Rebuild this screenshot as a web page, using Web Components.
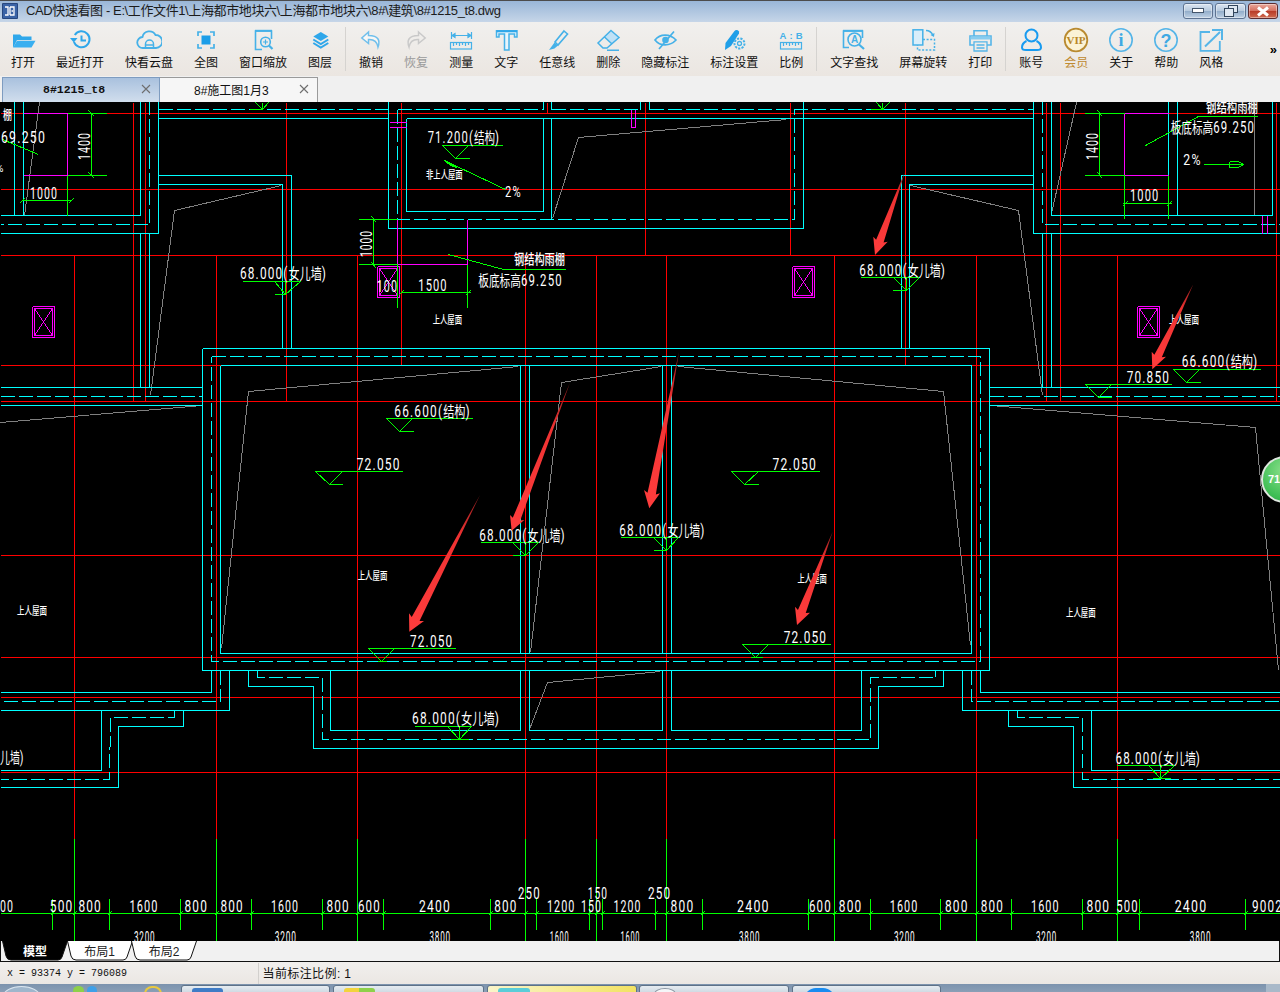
<!DOCTYPE html>
<html lang="zh"><head><meta charset="utf-8"><title>CAD快速看图</title>
<style>
html,body{margin:0;padding:0;height:992px;overflow:hidden;background:#f0f0f0}
body{display:flex;flex-direction:column;font-family:"Liberation Sans","Noto Sans CJK SC",sans-serif}
</style></head><body>
<title-bar>CAD快速看图 - E:\工作文件1\上海都市地块六\上海都市地块六\8#\建筑\8#1215_t8.dwg</title-bar>
<tool-bar></tool-bar>
<doc-tabs></doc-tabs>
<cad-canvas></cad-canvas>
<layout-tabs></layout-tabs>
<status-bar></status-bar>
<task-bar></task-bar>
<script>
const mk=(cls,name)=>customElements.define(name,cls);
class Base extends HTMLElement{
  constructor(html){super();this.attachShadow({mode:'open'}).innerHTML=html;}
}
mk(class extends Base{constructor(){super(`<style>
:host{display:flex;flex:none;height:22px;box-sizing:border-box;border-top:1px solid #4c4c4c;align-items:flex-start;background:linear-gradient(#99b6d8,#c6d6e8);color:#1c1c1c;font-size:13px;line-height:20px;position:relative}
.logo{flex:none;margin:2px 8px 0 2px;width:16px;height:16px}
.t{flex:1;white-space:nowrap;letter-spacing:-.39px}
.w{flex:none;display:flex;gap:2px;margin:2px 2px 0 0}
.b{box-sizing:border-box;height:16px;width:30px;border:1px solid #5d7391;border-radius:3px;background:linear-gradient(#dbe5f1 0,#b7cade 48%,#93aecb 52%,#bfd1e4 100%);display:flex;align-items:center;justify-content:center;box-shadow:inset 0 0 0 1px #ffffff66}
.c{border-color:#5c2c30;background:linear-gradient(#e9a99c 0,#d5705f 48%,#b83b28 52%,#cf6a4f 100%)}
</style>
<svg class="logo" viewBox="0 0 16 16"><rect width="16" height="16" rx="1" fill="#27477f"/><rect x="1" y="1" width="14" height="14" fill="#3a63a6"/><path d="M3 4h3v8H3M8 4v8M8 4h4v8h-4M9.5 8h1.5" fill="none" stroke="#fff" stroke-width="1.3"/></svg>
<span class="t"><slot></slot></span>
<div class="w">
<div class="b"><svg width="12" height="6"><rect x=".5" y=".5" width="11" height="4" fill="#fff" stroke="#44566c"/></svg></div>
<div class="b" style="width:31px"><svg width="14" height="12" fill="none" stroke="#33465c"><rect x="4.5" y=".5" width="9" height="7" fill="#dfe8f2"/><rect x=".5" y="3.5" width="9" height="8" fill="#dfe8f2"/></svg></div>
<div class="b c"><svg width="14" height="11"><path d="M2 1.5l10 8M12 1.5l-10 8" stroke="#fff" stroke-width="3"/></svg></div>
</div>`);}},'title-bar');

const B='#2fa7ea',L='#45b1e8';
const ruler=`<rect x="2.5" y="15.5" width="21" height="6.5"/><path d="M5.5 16v3M8.5 16v2M11.5 16v3M14.5 16v2M17.5 16v3M20.5 16v2"/>`;
const icons={
open:`<path d="M3 20V7.5h7l2 2h9.500V13H7L3.500 20z" fill="${B}"/><path d="M7 13.800h18.500L21.500 20.500H3z" fill="#39aff0"/>`,
recent:`<g fill="none" stroke="${B}" stroke-width="2"><path d="M7.800 8A8 8 0 1 1 7 15"/><path d="M14.500 8.500v5h4.500"/></g><path d="M3 11h7.500L6.800 15.500z" fill="${B}"/>`,
cloud:`<g fill="none" stroke="${L}" stroke-width="1.800"><path d="M7 21a5.500 5.500 0 0 1-.5-11A7 7 0 0 1 19.500 8a6.500 6.500 0 0 1 .5 13z"/><path d="M9.500 21v-4a4 4 0 0 1 8 0v4M9.500 18h8" stroke-width="1.500"/></g>`,
fit:`<path d="M5 9V5h4M17 5h4v4M21 17v4h-4M9 21H5v-4" fill="none" stroke="${L}" stroke-width="1.700"/><rect x="8.500" y="8.500" width="9" height="9" fill="#1c9ee8"/>`,
zoom:`<g fill="none" stroke="${L}" stroke-width="1.600"><path d="M21.500 12V4H5.500v18.500H12"/><path d="M5 3.800h17" stroke-width="2"/><circle cx="15.500" cy="15" r="4.800"/><path d="M19 18.500l3.500 3.500" stroke-width="2.200"/><path d="M13 15h5M15.500 12.500v5" stroke-width="1.200"/></g>`,
layers:`<path d="M13.800 5l7.500 4.500-7.500 4.500-7.500-4.500z" fill="${B}"/><g fill="none" stroke="${B}" stroke-width="2"><path d="M6.300 12.500l7.500 4.500 7.500-4.500M6.300 16l7.500 4.500 7.500-4.500"/></g>`,
undo:`<path d="M10.500 5L3.800 11l6.700 5.500v-4c5-.3 8.500 1.500 9.500 7.500 2.200-6 1-11.500-9.500-11.500z" fill="#fff8" stroke="#6fbfec" stroke-width="1.500"/>`,
redo:`<path d="M15.500 5L22.200 11l-6.700 5.500v-4c-5-.3-8.500 1.500-9.500 7.500-2.200-6-1-11.500 9.500-11.500z" fill="none" stroke="#c9c9c9" stroke-width="1.500"/>`,
measure:`<g fill="none" stroke="${L}" stroke-width="1.200"><path d="M3.500 5v7M23.500 5v7M4 8.500h19"/><path d="M4 8.500l3-2v4zM23 8.500l-3-2v4z" fill="${L}"/>${ruler}</g>`,
text:`<path d="M3.500 3.800H24V10h-2.500V7H16v16h-4.500V7H6v3H3.500z" fill="#e8f5fc" stroke="${L}" stroke-width="1.500"/><path d="M3.500 4.300H24" stroke="${B}" stroke-width="2"/>`,
pen:`<path d="M20 4l3.500 3L14 18l-3-3z" fill="none" stroke="${L}" stroke-width="1.600"/><path d="M10.500 15.500l3.500 3-3.500 3-5.500 1.500z" fill="${L}"/>`,
erase:`<path d="M16 4l8 6.500-7 6.500-7.500-7z" fill="#bfe1f6"/><path d="M16 3.500l8 7-12 10.500H8l-5-5zM9.500 10l7.500 7M12 23.300h12" fill="none" stroke="${L}" stroke-width="1.500"/>`,
eye:`<g fill="none" stroke="${L}" stroke-width="1.700"><path d="M3 13C8 6.500 18 6.500 24 13 18 19.500 8 19.500 3 13z"/><path d="M7 22L22 4.500"/></g><circle cx="13.500" cy="13" r="3.300" fill="${L}"/>`,
setting:`<path d="M13.500 4a2.600 2.600 0 0 1 4.500 2.500L10 19l-6 4 .5-7z" fill="#1f9fe8"/><circle cx="18.500" cy="16.500" r="5" fill="#f0eeeb" stroke="${L}" stroke-width="2" stroke-dasharray="2.200 1.200"/><circle cx="18.500" cy="16.500" r="2" fill="none" stroke="${L}" stroke-width="1.300"/>`,
scale:`<text x="1.500" y="11.500" font-family="Liberation Sans" font-weight="700" font-size="9.500" fill="${L}" textLength="23">A:B</text><g fill="none" stroke="${L}" stroke-width="1.200">${ruler}</g>`,
find:`<g fill="none" stroke="${L}" stroke-width="1.600"><path d="M21.500 11V4H2.500v16.500H8"/><path d="M2 3.800h20" stroke-width="2"/><circle cx="13.500" cy="12.500" r="6.500"/><path d="M18 17.500l5 4.500" stroke-width="2.200"/></g><text x="10" y="16" font-family="Liberation Sans" font-weight="700" font-size="10" fill="${L}">A</text>`,
rotate:`<g fill="none" stroke="${L}" stroke-width="1.500"><rect x="3" y="2.800" width="9.800" height="15.200" fill="#d9eefa"/><path d="M13 12.500h11.500V23H7.500v-5" stroke-dasharray="2 1.600"/><path d="M16 3.500c3 0 5.500 1.500 7 5"/></g><path d="M20.500 8l3.500 2 .5-4z" fill="${L}"/>`,
print:`<g fill="none" stroke="#55b5e8" stroke-width="1.600"><path d="M7 9V3.800h13V9M7 18H3V9h21v9h-4"/><path d="M7 14.800h13V24H7zM9.500 18h8M9.500 21h8" stroke-width="1.300"/></g><path d="M3.500 9.500h20v3h-20z" fill="#88cdf0"/>`,
user:`<g fill="none" stroke="#189bf0" stroke-width="2"><circle cx="13.500" cy="8.500" r="6"/><path d="M8.500 14C5.500 15.500 4 18 4 20.500 4 22.500 6 23 8 23h11c2 0 4-.5 4-2.500 0-2.500-1.500-5-4.500-6.500"/></g>`,
vip:`<circle cx="13" cy="13" r="11.300" fill="#fbf3d6" stroke="#b98a30" stroke-width="1.800"/><text x="13" y="16.500" text-anchor="middle" font-family="Liberation Serif" font-weight="700" font-size="10" fill="#b88726" textLength="19" lengthAdjust="spacingAndGlyphs">VIP</text>`,
info:`<circle cx="13" cy="13" r="11.200" fill="none" stroke="#55b5e8" stroke-width="1.600"/><text x="13" y="19" text-anchor="middle" font-family="Liberation Serif" font-weight="700" font-size="18" fill="#3fa9e3">i</text>`,
help:`<circle cx="13" cy="13" r="11.200" fill="none" stroke="#55b5e8" stroke-width="1.600"/><text x="13" y="19.500" text-anchor="middle" font-family="Liberation Sans" font-weight="700" font-size="18" fill="#3fa9e3">?</text>`,
style:`<g fill="none" stroke="#55b5e8" stroke-width="1.800"><path d="M12 5H2.500v18.800h19.300V14"/><path d="M7 19.500L22 5" stroke-width="2"/><path d="M14 3h10v10" stroke-width="2"/></g>`
};
mk(class extends Base{constructor(){super(`<style>
:host{display:flex;flex-direction:column;align-items:center;padding:5px 10.5px 0;font-size:12px;line-height:14px;color:#111;white-space:nowrap}
svg{display:block;margin:0 -2px 3px}
:host([vip]){color:#bf8a31}:host([off]){color:#9a9a9a}
</style><svg width="26" height="26" viewBox="0 0 26 26"></svg><slot></slot>`);}
connectedCallback(){this.shadowRoot.querySelector('svg').innerHTML=icons[this.getAttribute('icon')];}},'tool-item');
const S=`<i></i>`;
mk(class extends Base{constructor(){super(`<style>
:host{display:flex;flex:none;height:54px;padding-left:.5px;box-sizing:border-box;background:linear-gradient(#f1f0ee,#ebe6e1);position:relative}
i{flex:none;width:1px;margin:5px 2.5px 5px;background:#d5d3d0}
b{margin-left:auto;margin-right:3px;align-self:center;font:700 13px "Liberation Sans";padding-top:0}
</style>
<tool-item icon="open">打开</tool-item><tool-item icon="recent">最近打开</tool-item><tool-item icon="cloud">快看云盘</tool-item><tool-item icon="fit">全图</tool-item><tool-item icon="zoom">窗口缩放</tool-item><tool-item icon="layers">图层</tool-item>${S}
<tool-item icon="undo">撤销</tool-item><tool-item icon="redo" off>恢复</tool-item><tool-item icon="measure">测量</tool-item><tool-item icon="text">文字</tool-item><tool-item icon="pen">任意线</tool-item><tool-item icon="erase">删除</tool-item><tool-item icon="eye">隐藏标注</tool-item><tool-item icon="setting">标注设置</tool-item><tool-item icon="scale">比例</tool-item>${S}
<tool-item icon="find">文字查找</tool-item><tool-item icon="rotate">屏幕旋转</tool-item><tool-item icon="print">打印</tool-item>${S}
<tool-item icon="user">账号</tool-item><tool-item icon="vip" vip>会员</tool-item><tool-item icon="info">关于</tool-item><tool-item icon="help">帮助</tool-item><tool-item icon="style">风格</tool-item><b>»</b>`);}},'tool-bar');

mk(class extends Base{constructor(){super(`<style>
:host{display:flex;flex:none;height:26px;box-sizing:border-box;padding:1px 0 0 2px;background:#f0f0f0}
.t{box-sizing:border-box;width:158px;height:25px;display:flex;align-items:center;border:1px solid #9a9a9a;border-bottom:none;padding-bottom:2px;font-size:12px;color:#111;background:#f6f6f6}
.a{width:158px;background:linear-gradient(#a9c1de,#d1deed);border-color:#7e9cc0;padding-left:40px;font:700 11.5px "Liberation Mono",monospace}
.n{padding-left:34px;border-left:none}
svg{margin-left:auto;margin-right:8px}
</style>
<div class="t a">8#1215_t8<svg width="10" height="10"><path d="M1 1l8 8M9 1l-8 8" stroke="#6e6e6e" stroke-width="1.100"/></svg></div>
<div class="t n">8#施工图1月3<svg width="10" height="10"><path d="M1 1l8 8M9 1l-8 8" stroke="#6e6e6e" stroke-width="1.100"/></svg></div>`);}},'doc-tabs');

/* ---------- drawing ---------- */
const sn=v=>Math.floor(v)+.5;
const path=a=>'M'+a.map((v,i)=>sn(v)+(i%2?'':',')).join(' ').replace(/(\d) (-?\d+\.5,)/g,'$1 L$2');
const lines=(list,col,extra='')=>`<path d="${list.map(path).join(' ')}" fill="none" stroke="${col}" ${extra}/>`;
const red=[];
[113,189,255,365,401,555,657,697,772].forEach(y=>red.push([0,y,1280,y]));
[[133,401],[145,401],[286,401],[547,113],[645,255],[790,255],[1046,401],[1060,401],[1276,401]].forEach(([x,y])=>red.push([x,102,x,y]));
[401,905].forEach(x=>red.push([x,102,x,365]));
const longs=[74,216,357,525,596,666,834,976,1117];
longs.forEach(x=>red.push([x,255,x,838]));
const gray=[[39,102,24,215],[281.7,185,174.3,210.7,150,395],[0,422,202,405.5],[221.3,648,248,391,518.3,366],[530,652,561,382.3,661.7,366],[678,366,943.4,391,970,645],[990,405.7,1255.6,427.3,1278,670],[786.7,119,578,137.7,552.7,218.3],[1076.7,102,1051.7,213],[910.7,185,1018.3,210.7,1042.7,395],[1254.5,102,1254.5,215],[529.8,729,547,682.3,640,673.3,660,671.5]];
const cyan=[
[14.5,100,14.5,215],[23.5,100,23.5,215],[0,215,140.5,215,140.5,100],[0,233,158.5,233,158.5,100],
[158.5,118.5,388.5,118.5],[388.5,100,388.5,228.5,803.5,228.5,803.5,100],
[158.5,175.5,291.5,175.5,291.5,348],[158.5,184.5,282.5,184.5,282.5,348],
[140.5,233,140.5,387.5],[149.5,233,149.5,387.5],[0,387.5,202.5,387.5],[0,405.5,202.5,405.5],
[202.5,348.5,989.5,348.5,989.5,670.5,202.5,670.5,202.5,348.5],
[220.5,365.5,971.5,365.5,971.5,653.5,220.5,653.5,220.5,365.5],
[520.5,365,520.5,653],[529.5,365,529.5,653],[662.5,365,662.5,653],[671.5,365,671.5,653],
[543.5,118.5,543.5,211.5,406.5,211.5,406.5,118.5],[543.5,100,543.5,109.5],[551.5,100,551.5,109.5],[640.5,100,640.5,109.5],[649.5,100,649.5,109.5],
[406.5,118.5,1033.5,118.5],[551.5,118.5,551.5,219.5],
[1033.5,100,1033.5,233.5,1280,233.5],[1051.5,100,1051.5,215.5,1272.5,215.5,1272.5,100],[1168.5,100,1168.5,215],[1177.5,100,1177.5,215],
[901.5,348,901.5,175.5,1033.5,175.5],[909.5,348,909.5,184.5,1033.5,184.5],[1042.5,233,1042.5,387.5],[1051.5,233,1051.5,387.5],[989.5,387.5,1280,387.5],[989.5,405.5,1280,405.5],
[211.5,670,211.5,692.5,0,692.5],[229.5,670,229.5,710.5,0,710.5],[183.5,710,183.5,726.5,118.5,726.5,118.5,787.5,0,787.5],[101.5,710,101.5,770.5,0,770.5],
[248.5,670,248.5,686.5,313.5,686.5,313.5,748.5,878.5,748.5,878.5,686.5,943.5,686.5,943.5,670],
[330.5,670,330.5,730.5,520.5,730.5,520.5,670],[529.5,670,529.5,730.5,662.5,730.5,662.5,670],[671.5,670,671.5,730.5,861.5,730.5,861.5,670],
[962.5,670,962.5,710.5,1280,710.5],[980.5,670,980.5,692.5,1280,692.5],[1008.5,710,1008.5,726.5,1073.5,726.5,1073.5,787.5,1280,787.5],[1091.5,710,1091.5,770.5,1280,770.5]];
const dash=[
[149.5,100,149.5,224.5,0,224.5],[0,396.5,202.5,396.5],[158.5,109.5,388.5,109.5],[397.5,109.5,543.5,109.5],[551.5,109.5,640.5,109.5],[649.5,109.5,1033.5,109.5],
[397.5,109.5,397.5,219.5,794.5,219.5,794.5,109.5],[1042.5,100,1042.5,224.5,1280,224.5],[989.5,396.5,1280,396.5],
[211.5,356.5,980.5,356.5,980.5,661.5,211.5,661.5,211.5,356.5],
[220.5,670,220.5,701.5,0,701.5],[174.5,710,174.5,717.5,110,717.5,109.5,779.5,0,779.5],
[257.5,670,257.5,677.5,322.5,677.5,322.5,739.5,870.5,739.5,870.5,677.5,935.5,677.5,935.5,670],
[971.5,670,971.5,701.5,1280,701.5],[1017.5,710,1017.5,717.5,1082.5,717.5,1082.5,779.5,1280,779.5]];
const mag=[[23,113,67.5,113,67.5,175,23,175],[389,122,406,122],[389,127,406,127],[631.5,109,631.5,127,635.5,127,635.5,109],
[397.5,219,397.5,264.5,467.5,264.5,467.5,219],[1168.5,113,1124.5,113,1124.5,175,1168.5,175],[1262.5,215,1262.5,233],[1267.5,215,1267.5,233]];
const box=(x,y)=>{const X=x+22,Y=y+31;mag.push([x,y,X,y,X,Y,x,Y,x,y],[x+2,y+2,X-2,y+2,X-2,Y-2,x+2,Y-2,x+2,y+2],[x+2,y+2,X-2,Y-2],[X-2,y+2,x+2,Y-2]);};
box(32,306);box(377,266);box(792,266);box(1137,306);
const grn=[
[67.5,113,106.5,113],[67.5,175,106.5,175],[91,113,91,175],[67.5,175,67.5,215],[21.5,200.5,70.5,200.5],[2,139,38.5,154],
[88,110,94,116],[88,172,94,178],[19,203,24,198],[68,203,73,198],
[358,219,397,219],[358,264,397,264],[373.5,219,373.5,264],[397.5,264,397.5,307],[467.5,264,467.5,307],[400,292.5,470.5,292.5],[371,216,376,222],[371,262,376,268],[398,295,403,290],[465,295,470,290],
[444.3,160.3,505.7,189],[444.3,160.3,456.7,167.7,450,165,444.3,160.3],
[448.3,254.3,503.3,269.3,565,269.3],[1145,145.7,1198.3,116,1257.5,116],[1203.3,164.5,1242.7,164.5],[1229,161,1238,161,1243,164.5,1238,167.5,1229,167.5,1229,161],
[1084,113,1124.5,113],[1084,175,1124.5,175],[1099.5,113,1099.5,175],[1124.5,175,1124.5,218],[1168.5,175,1168.5,218],[1122,203.5,1171.5,203.5],[1097,110,1102,116],[1097,172,1102,178],[1122,206,1127,201],[1166,206,1171,201],
[249,109.5,262,109.5],[262,102,262,109.5],[255,102,262,109.5,268,102],[882.5,102,882.5,109.5],[876,102,882.5,109.5,889,102],[870,109.5,883,109.5],
[0,913,1280,913]];
const el=(x0,x1,y,l,t,r,s0,s1,c)=>{grn.push([x0,y,x1,y],[l,y,t,y+13,r,y],[s0,y+13,s1,y+13]);if(c)grn.push([t,y,t,y+13]);};
el(242,300,281.3,274,285.7,300,274,285.7,1);el(442.3,502.7,145.3,442.3,455.7,468.3,455.7,469);
el(860,919,277.3,893.3,906,919,892,906,1);el(1173.3,1260.7,369.3,1173.3,1186.7,1199.3,1186.7,1200);
el(1085,1171.7,384.3,1085,1098.3,1111.7,1098.3,1111);el(386,472.7,418.3,386,399.3,412.7,399.3,413);
el(315.3,402.7,471.3,315.3,329,342.3,329,342);el(480,538.7,542.3,512.7,525.3,538.7,512,525,1);
el(368.3,455,648.3,368.3,381.7,394.3,377,386);el(620,678.6,537.3,653.3,666,678.6,653,666,1);
el(731,819,471.3,731,744.6,758,744.6,758);el(742.2,830,644.3,742.2,755.3,768.3,750,762);
el(414,471.4,726.3,447,459,471.4,450,468,1);el(1116,1174,765.3,1148,1160.8,1174,1152,1170,1);
const ticks=[52.6,74,109.4,180.4,216,251.4,322.4,357.5,383.7,490.2,525,536.3,589.4,596,602.4,655.5,666.3,702.6,808.3,834,870.6,940.6,976,1011.6,1082.6,1117,1139.5,1245.2];
ticks.forEach(x=>{grn.push([x,898,x,929],[x-2,915,x+2,911]);});
longs.forEach(x=>grn.push([x,838,x,941]));
const cjk=/[\u4e00-\u9fff]+/g;
const T=(s,x0,x1,b,fs=16,cs=15,rot)=>{const all=/^[\u4e00-\u9fff]+$/.test(s);return `<text${all?' class="n"':''} x="${rot?b:x0}" y="${rot?x1:b}" font-size="${fs}" textLength="${x1-x0}" lengthAdjust="spacingAndGlyphs"${rot?` transform="rotate(-90 ${b} ${x1})"`:''}>${all?s:s.replace(cjk,m=>`<tspan font-size="${cs}" style="letter-spacing:0">${m}</tspan>`)}</text>`;};
const note=(x0,x1,cy)=>T('上人屋面',x0,x1,cy+4.5,11,11);
const texts=[
T('69.250',1,46,143),T('1000',30,58,198.5),T('棚',3,12,119,13,13),T('%',-4,5,172,10),
T('68.000(女儿墙)',240,327,279),T('100',376.7,398,291.5),
T('71.200(结构)',427.7,500,143),T('非上人屋面',426,462.7,178.5,11,11),T('2%',505,522,196.5,14),
T('钢结构雨棚',514,565,264,14,14),T('板底标高69.250',478.3,562.7,286),T('1500',418.3,447.7,290.5),note(432.7,462,319),
T('68.000(女儿墙)',859.3,946,275.5),T('66.600(结构)',1181.7,1258.3,366.5),T('70.850',1126.7,1170,382.5),note(1169,1199,319),
T('钢结构雨棚',1206,1258,111.5,14,14),T('板底标高69.250',1170.7,1255,132.5),T('2%',1183.3,1202,165,14),T('1000',1130,1159.3,201),
T('66.600(结构)',394.3,470.7,416.5),T('72.050',356.7,400.7,470),T('68.000(女儿墙)',479.3,565.7,541),note(357.7,387.3,575),T('72.050',410,453.3,646.5),
T('68.000(女儿墙)',619.3,705.5,535.5),T('72.050',772.6,817,470),T('72.050',783.7,827.2,642.5),note(797.5,826.8,578.7),note(1066,1095.6,612.3),note(17,47,610),
T('68.000(女儿墙)',412,500,723.5),T('儿墙)',0,24.5,763),T('68.000(女儿墙)',1115.5,1201,763.5),
T('1400',132,160,90,16,13,1),T('1400',132,160,1098,16,13,1),T('1000',230,257,372,16,13,1)];
[['00',0,14],['500',49.8,73.5],['800',78.4,102],['1600',129.4,158.4],['800',184.5,208],['800',220.4,243.7],['1600',271,299],['800',326.5,349.8],['600',358,380.8],['2400',419,451],['800',494.3,517.5],['1200',547,575.5],['150',581,602],['1200',613.5,641.4],['800',670.6,694.3],['2400',737,769.8],['600',809,831.8],['800',838.8,862.4],['1600',889.8,918.4],['800',944.9,968.6],['800',980.8,1004],['1600',1031,1059.6],['800',1086.5,1110.2],['500',1116.3,1138.8],['2400',1174.7,1207.3],['9002',1252,1283]].forEach(a=>texts.push(T(a[0],a[1],a[2],912)));
[['250',518,540.8],['150',587.8,608],['250',648,671.4]].forEach(a=>texts.push(T(a[0],a[1],a[2],899)));
[['3200',134,155.5],['3200',274.7,296.7],['3800',429.4,451],['1600',549.8,569.4],['1600',620.6,640.3],['3800',739,760.4],['3200',893.9,915.5],['3200',1035.9,1057.1],['3800',1189.8,1211.4]].forEach(a=>texts.push(T(a[0],a[1],a[2],943)));
const arrow=(t,p,a,b)=>{const n=(u,v,k)=>[u[0]+(v[0]-u[0])*k+(p[0]-(a[0]+b[0])/2)*.12,u[1]+(v[1]-u[1])*k+(p[1]-(a[1]+b[1])/2)*.12];
 const c=n(a,b,.24),d=n(a,b,.76);
 return `<polygon points="${[t,d,b,p,a,c].map(q=>q.join(',')).join(' ')}" fill="url(#ar${Math.round(t[0])})"/><linearGradient id="ar${Math.round(t[0])}" gradientUnits="userSpaceOnUse" x1="${t[0]}" y1="${t[1]}" x2="${p[0]}" y2="${p[1]}"><stop offset="0" stop-color="#8a1c1c"/><stop offset=".3" stop-color="#ef3232"/><stop offset="1" stop-color="#ff3d3d"/></linearGradient>`;};
const arrows=[arrow([905,171.7],[875,255],[873.3,236.7],[887.7,241.7]),arrow([1193.3,284.3],[1152.3,369.3],[1151.7,351.7],[1166,356.7]),arrow([570,382.7],[511.7,530.7],[510,515],[524.3,520]),arrow([480,495],[409.3,631.7],[409,613.3],[424,621]),arrow([679,352],[649.3,508.3],[644,490],[660,493.3]),arrow([832.7,531.7],[797,625],[795,606.7],[810,612.7])];
mk(class extends Base{constructor(){super(`<style>
:host{display:block;flex:none;height:839px;background:#000;position:relative;overflow:hidden}
svg{display:block}
text{fill:#fff;font-family:Roboto,"Liberation Sans","Noto Sans CJK SC",sans-serif;font-weight:400;letter-spacing:1.6px}
text.n{font-family:"Noto Sans CJK SC",sans-serif;font-weight:500;letter-spacing:0}
.badge{position:absolute;left:1261px;top:354px;width:47px;height:47px;box-sizing:border-box;border:2px solid #dfe6df;border-radius:50%;background:radial-gradient(circle at 50% 30%,#8be08b,#3fbf55 70%,#2aa544);color:#fff;font:700 11px "Liberation Sans";line-height:43px;padding-left:5px}
</style><svg width="1280" height="839" viewBox="0 102 1280 839">
<g shape-rendering="crispEdges">${lines(red,'#f00')}${lines(gray,'#808080')}${lines(cyan,'#0ff')}${lines(dash,'#0ff','stroke-dasharray="14 4"')}${lines(mag,'#f0f')}${lines(grn,'#0f0')}</g>
${texts.join('')}${arrows.join('')}</svg><div class="badge">71</div>`);}},'cad-canvas');

mk(class extends Base{constructor(){super(`<style>
:host{display:block;position:relative;flex:none;width:66px;height:19px;margin-right:-1.5px;text-align:center;font-size:12px;line-height:23px;color:#222}
svg{position:absolute;left:0;top:0;z-index:-1}
:host([on]){color:#fff;font-weight:700}
</style><svg width="66" height="20" viewBox="0 0 66 20"><path d="M.5 0L4 15Q5 19 9 19H56Q59 19 60 16L65.500 0" fill="#fff" stroke="#111"/></svg><slot></slot>`);}
connectedCallback(){if(this.hasAttribute('on')){const p=this.shadowRoot.querySelector('path');p.setAttribute('fill','#000');}}},'layout-tab');
mk(class extends Base{constructor(){super(`<style>
:host{display:flex;flex:none;height:21px;box-sizing:border-box;padding-left:1px;background:#f1f1f1;border:1px solid #111;border-width:0 1px 1px;isolation:isolate}
</style><layout-tab on>模型</layout-tab><layout-tab>布局1</layout-tab><layout-tab>布局2</layout-tab>`);}},'layout-tabs');

mk(class extends Base{constructor(){super(`<style>
:host{display:flex;flex:none;height:22px;align-items:center;background:linear-gradient(#f1efed,#ebe7e3);color:#111}
.a{width:250.5px;padding:1px 0 0 7px;border-right:1px solid #d2d0cd;font:10px/20px "Liberation Mono",monospace;white-space:pre}
.b{padding:1px 0 0 4px;font-size:12px;letter-spacing:.4px;line-height:20px}
</style><div class="a">x = 93374 y = 796089</div><div class="b">当前标注比例: 1</div>`);}},'status-bar');

mk(class extends Base{constructor(){super(`<style>
:host{display:flex;flex:none;height:8px;overflow:hidden;background:linear-gradient(#7c93ad,#8a9fb6);position:relative;gap:0}
.o{flex:none;position:relative}
.i{flex:none;box-sizing:border-box;height:12px;margin-top:1px;border:1px solid #5e7288;border-radius:3px;background:linear-gradient(#e6ecf1,#c2cfda);padding:2px 0 0 10px}
.i u{display:block;height:12px;border-radius:3px}
.y{background:linear-gradient(90deg,#faf5ca,#f2e263)}
</style>
<div class="o" style="width:37px;height:20px;margin:2px 0 0 3px;border-radius:50%;border:1px solid #dbe6f0;box-sizing:border-box;background:#9fb6cc"></div>
<div class="o" style="width:11px;height:9px;margin:2px 0 0 33px;border-radius:50% 50% 0 0;background:#8ed04a"></div>
<div class="o" style="width:10px;height:9px;margin:2px 0 0 3px;border-radius:50% 50% 0 0;background:#3fa0e8"></div>
<div class="o" style="width:18px;height:9px;margin:2px 0 0 47px;border-radius:8px 8px 0 0;border:2px solid #e9c93f;box-sizing:border-box"></div>
<div class="i" style="width:149px;margin-left:18.500px"><u style="width:31px;background:#3f7cc6"></u></div>
<div class="i" style="width:151px;margin-left:3px"><u style="width:31px;background:linear-gradient(90deg,#f2d33c 50%,#8ed04a 50%)"></u></div>
<div class="i y" style="width:150px;margin-left:3px"><u style="width:32px;background:#5bcdd8"></u></div>
<div class="i" style="width:150px;margin-left:2.500px;padding-left:14px"><u style="width:22px;border-radius:50%;background:#f4f6f8;border:1px solid #8a96a2;box-sizing:border-box"></u></div>
<div class="i" style="width:149px;margin-left:3px;padding-left:11px"><u style="width:31px;border-radius:12px 12px 0 0;background:#1a8cf0"></u></div>
<div class="o" style="margin-left:auto;width:14px;height:8px;background:#a9b9c9"></div>`);}},'task-bar');
</script>
</body></html>
